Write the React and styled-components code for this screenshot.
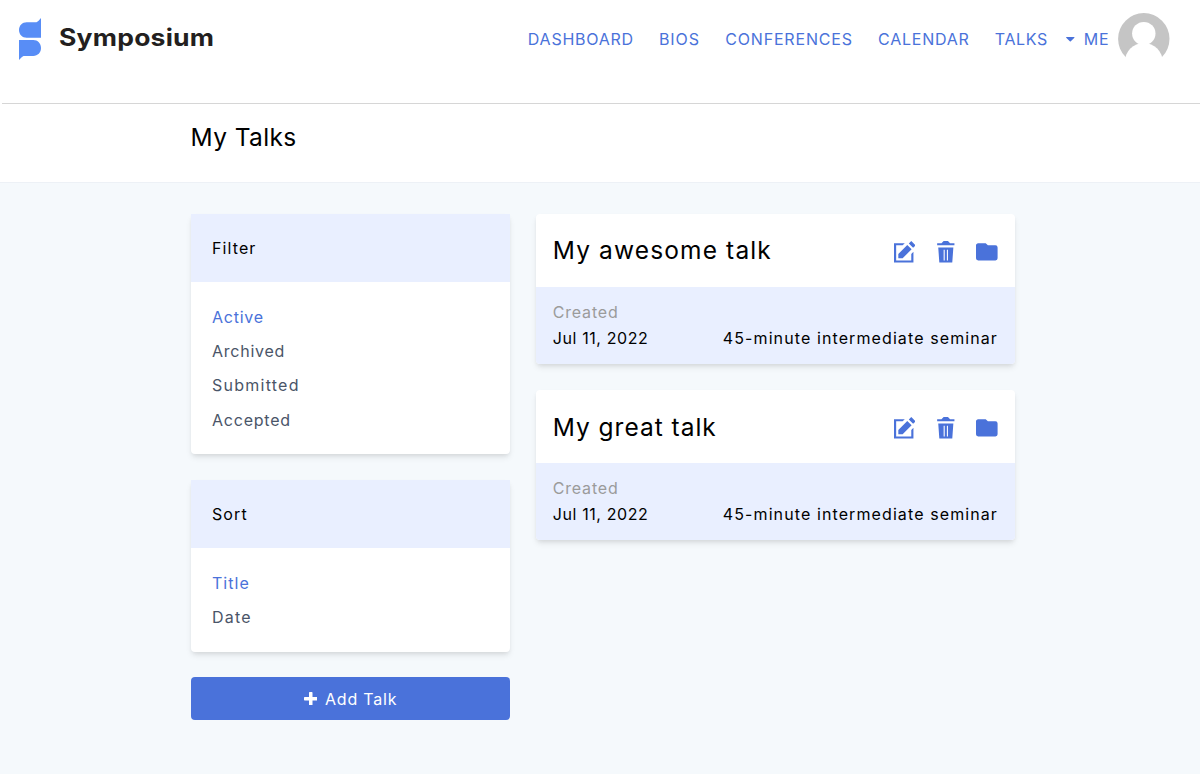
import React from "react";
import styled, { createGlobalStyle } from "styled-components";

const GlobalStyle = createGlobalStyle`
  *, *::before, *::after { box-sizing: border-box; }
  body {
    margin: 0;
    background: #f5f9fc;
    color: #000;
    font: 400 16px/1.6 Inter, "Liberation Sans", sans-serif;
  }
  h1, h2, h3, ul { margin: 0; padding: 0; font-weight: 400; }
  ul { list-style: none; }
  a { color: inherit; text-decoration: none; }
`;

const blue = "#4a72da";
const shadow = "0 4px 6px -1px rgba(0, 0, 0, 0.1), 0 2px 4px -1px rgba(0, 0, 0, 0.06)";

const Spaced = styled.span`
  letter-spacing: ${(p) => p.$ls}px;
  white-space: nowrap;
`;

const Header = styled.header`
  height: 103px;
  padding: 13px 30.3px 0 18px;
  background: #fff;
  display: flex;
  align-items: flex-start;
  justify-content: space-between;
`;

const Brand = styled.a`
  display: flex;
  align-items: flex-start;
  padding-top: 5px;
  gap: 17px;
`;

const BrandName = styled.span`
  color: #231f20;
  font-size: 24px;
  font-weight: 700;
  line-height: 40px;
  letter-spacing: 0.2px;
  transform: scaleX(1.105);
  transform-origin: left;
`;

const Nav = styled.nav`
  height: 52px;
  display: flex;
  align-items: center;
  gap: 25.2px;
  color: ${blue};
  line-height: 26px;
`;

const Account = styled.a`
  display: flex;
  align-items: center;
  margin-left: -6.6px;
`;

const Caret = styled.svg`
  margin-right: 8.8px;
`;

const Avatar = styled.svg`
  margin-left: 8.7px;
`;

const TitleBar = styled.div`
  height: 79px;
  background: #fff;
  border-bottom: 1px solid #edf1f6;
`;

const Divider = styled.div`
  height: 1px;
  margin-left: 2px;
  background: #d6d6d6;
`;

const TitleBacking = styled.div`
  background: #fff;
`;

const Container = styled.div`
  width: 825px;
  margin-left: 190.6px;
`;

const PageTitle = styled.h1`
  padding-top: 13px;
  font-size: 24.5px;
  line-height: 40px;
`;

const Columns = styled(Container)`
  display: grid;
  grid-template-columns: 319.6px 479.6px;
  column-gap: 25.4px;
  align-items: start;
  padding-top: 30.5px;
`;

const Stack = styled.div`
  display: flex;
  flex-direction: column;
  gap: 25.8px;
`;

const Panel = styled.section`
  background: #fff;
  border-radius: 4px;
  box-shadow: ${shadow};
`;

const PanelHeader = styled.h2`
  height: 68.6px;
  padding: 1.4px 21.4px 0;
  display: flex;
  align-items: center;
  background: #e9efff;
  font-size: 16px;
`;

const PanelList = styled.ul`
  padding: 17.2px 21.4px;
`;

const PanelItem = styled.li`
  height: 34.4px;
  padding-top: 2px;
  display: flex;
  align-items: center;
  color: ${(p) => (p.$active ? blue : "#4a5568")};
`;

const AddButton = styled.a`
  height: 42.5px;
  display: flex;
  align-items: center;
  justify-content: center;
  gap: 8px;
  border-radius: 4px;
  background: ${blue};
  color: #fff;

  > span { padding-top: 2px; }
`;

const TalkCard = styled.article`
  background: #fff;
  border-radius: 4px;
  box-shadow: ${shadow};
  overflow: hidden;
`;

const TalkHeader = styled.div`
  height: 73.6px;
  padding: 0 17.4px 0 17.2px;
  display: flex;
  align-items: center;
  justify-content: space-between;
`;

const TalkTitle = styled.h3`
  padding-top: 0.4px;
  font-size: 24.5px;
  line-height: 40px;
`;

const Actions = styled.div`
  display: flex;
  gap: 19.6px;
  padding-top: 3px;
  color: ${blue};
`;

const ActionIcon = styled.svg`
  width: 21.6px;
  height: 21.6px;
  fill: currentColor;
`;

const TalkMeta = styled.div`
  padding: 12.9px 17.2px;
  display: flex;
  align-items: flex-end;
  justify-content: space-between;
  background: #e9efff;
  line-height: 25.6px;
`;

const Label = styled.div`
  color: #9b9b9b;
`;

const icons = {
  compose: "M2 4v14h14v-6l2-2v10H0V2h10L8 4H2zm10.3-.3l4 4L8 16H4v-4l8.3-8.3zm1.4-1.4L16 0l4 4-2.3 2.3-4-4z",
  trash: "M6 2l2-2h4l2 2h4v2H2V2h4zM3 6h14l-1 14H4L3 6zm5 2v10h1V8H8zm3 0v10h1V8h-1z",
  folder: "M0 4c0-1.1.9-2 2-2h7l2 2h7a2 2 0 0 1 2 2v10a2 2 0 0 1-2 2H2a2 2 0 0 1-2-2V4z",
};

const navItems = [
  ["DASHBOARD", 0.74],
  ["BIOS", 0.95],
  ["CONFERENCES", 0.82],
  ["CALENDAR", 0.77],
  ["TALKS", 0.6],
];

const panels = [
  {
    title: ["Filter", 1.1],
    items: [["Active", 0.75], ["Archived", 0.75], ["Submitted", 1.25], ["Accepted", 0.78]],
  },
  { title: ["Sort", 1.1], items: [["Title", 1.05], ["Date", 1.2]] },
];

const talks = [["My awesome talk", 1.14], ["My great talk", 0.98]];

function Logo() {
  return (
    <svg width="24" height="43" viewBox="0 0 24 43" fill="#588df6">
      <path d="M23 0v19.7H8.7C4.2 19.7 1 16.5 1 12s3.2-7.8 7.7-7.8h8.800c1.400 0 2.300-.6 3.100-1.500z" />
      <path d="M1 42V22.1h14.300c4.500 0 7.700 3.300 7.700 7.900s-3.200 7.900-7.700 7.900H6.500c-1.400 0-2.300.6-3.100 1.500z" />
    </svg>
  );
}

function Icon({ name }) {
  return (
    <ActionIcon viewBox="0 0 20 20">
      <path d={icons[name]} />
    </ActionIcon>
  );
}

export default function App() {
  return (
    <>
      <GlobalStyle />
      <Header>
        <Brand>
          <Logo />
          <BrandName>Symposium</BrandName>
        </Brand>
        <Nav>
          {navItems.map(([label, ls]) => (
            <Spaced as="a" key={label} $ls={ls}>{label}</Spaced>
          ))}
          <Account>
            <Caret width="8.6" height="5" viewBox="0 0 8.6 5">
              <path d="M.6 0h7.400c.5 0 .7.500.4.800L4.800 4.300c-.3.300-.7.300-1 0L.2.800C-.1.500.1 0 .6 0z" fill={blue} />
            </Caret>
            <Spaced $ls={0.8}>ME</Spaced>
            <Avatar width="51.6" height="51.6" viewBox="0 0 51.6 51.6">
              <circle cx="25.8" cy="25.8" r="25.7" fill="#c5c5c5" />
              <circle cx="25.8" cy="20.6" r="11.7" fill="#fff" />
              <circle cx="25.8" cy="49" r="19" fill="#fff" />
            </Avatar>
          </Account>
        </Nav>
      </Header>
      <TitleBacking>
        <Divider />
        <TitleBar>
          <Container>
            <PageTitle><Spaced $ls={0.38}>My Talks</Spaced></PageTitle>
          </Container>
        </TitleBar>
      </TitleBacking>
      <Columns as="main">
        <Stack>
          {panels.map(({ title, items }) => (
            <Panel key={title[0]}>
              <PanelHeader><Spaced $ls={title[1]}>{title[0]}</Spaced></PanelHeader>
              <PanelList>
                {items.map(([label, ls], i) => (
                  <PanelItem key={label} $active={i === 0}>
                    <Spaced as="a" $ls={ls}>{label}</Spaced>
                  </PanelItem>
                ))}
              </PanelList>
            </Panel>
          ))}
          <AddButton>
            <svg width="13.5" height="13.5" viewBox="0 0 13.5 13.5" fill="#fff">
              <path d="M5.7 0h2.100a.7.700 0 0 1 .7.700V5h4.300a.7.700 0 0 1 .7.700v2.100a.7.700 0 0 1-.7.700H8.500v4.300a.7.700 0 0 1-.7.700H5.700a.7.700 0 0 1-.7-.7V8.500H.7a.7.700 0 0 1-.7-.7V5.700A.7.700 0 0 1 .7 5H5V.7a.7.700 0 0 1 .7-.7z" />
            </svg>
            <Spaced $ls={0.79}>Add Talk</Spaced>
          </AddButton>
        </Stack>
        <Stack>
          {talks.map(([title, ls]) => (
            <TalkCard key={title}>
              <TalkHeader>
                <TalkTitle><Spaced $ls={ls}>{title}</Spaced></TalkTitle>
                <Actions>
                  <Icon name="compose" />
                  <Icon name="trash" />
                  <Icon name="folder" />
                </Actions>
              </TalkHeader>
              <TalkMeta>
                <div>
                  <Label><Spaced $ls={0.8}>Created</Spaced></Label>
                  <Spaced $ls={0.6}>Jul 11, 2022</Spaced>
                </div>
                <Spaced $ls={1.1}>45-minute intermediate seminar</Spaced>
              </TalkMeta>
            </TalkCard>
          ))}
        </Stack>
      </Columns>
    </>
  );
}
